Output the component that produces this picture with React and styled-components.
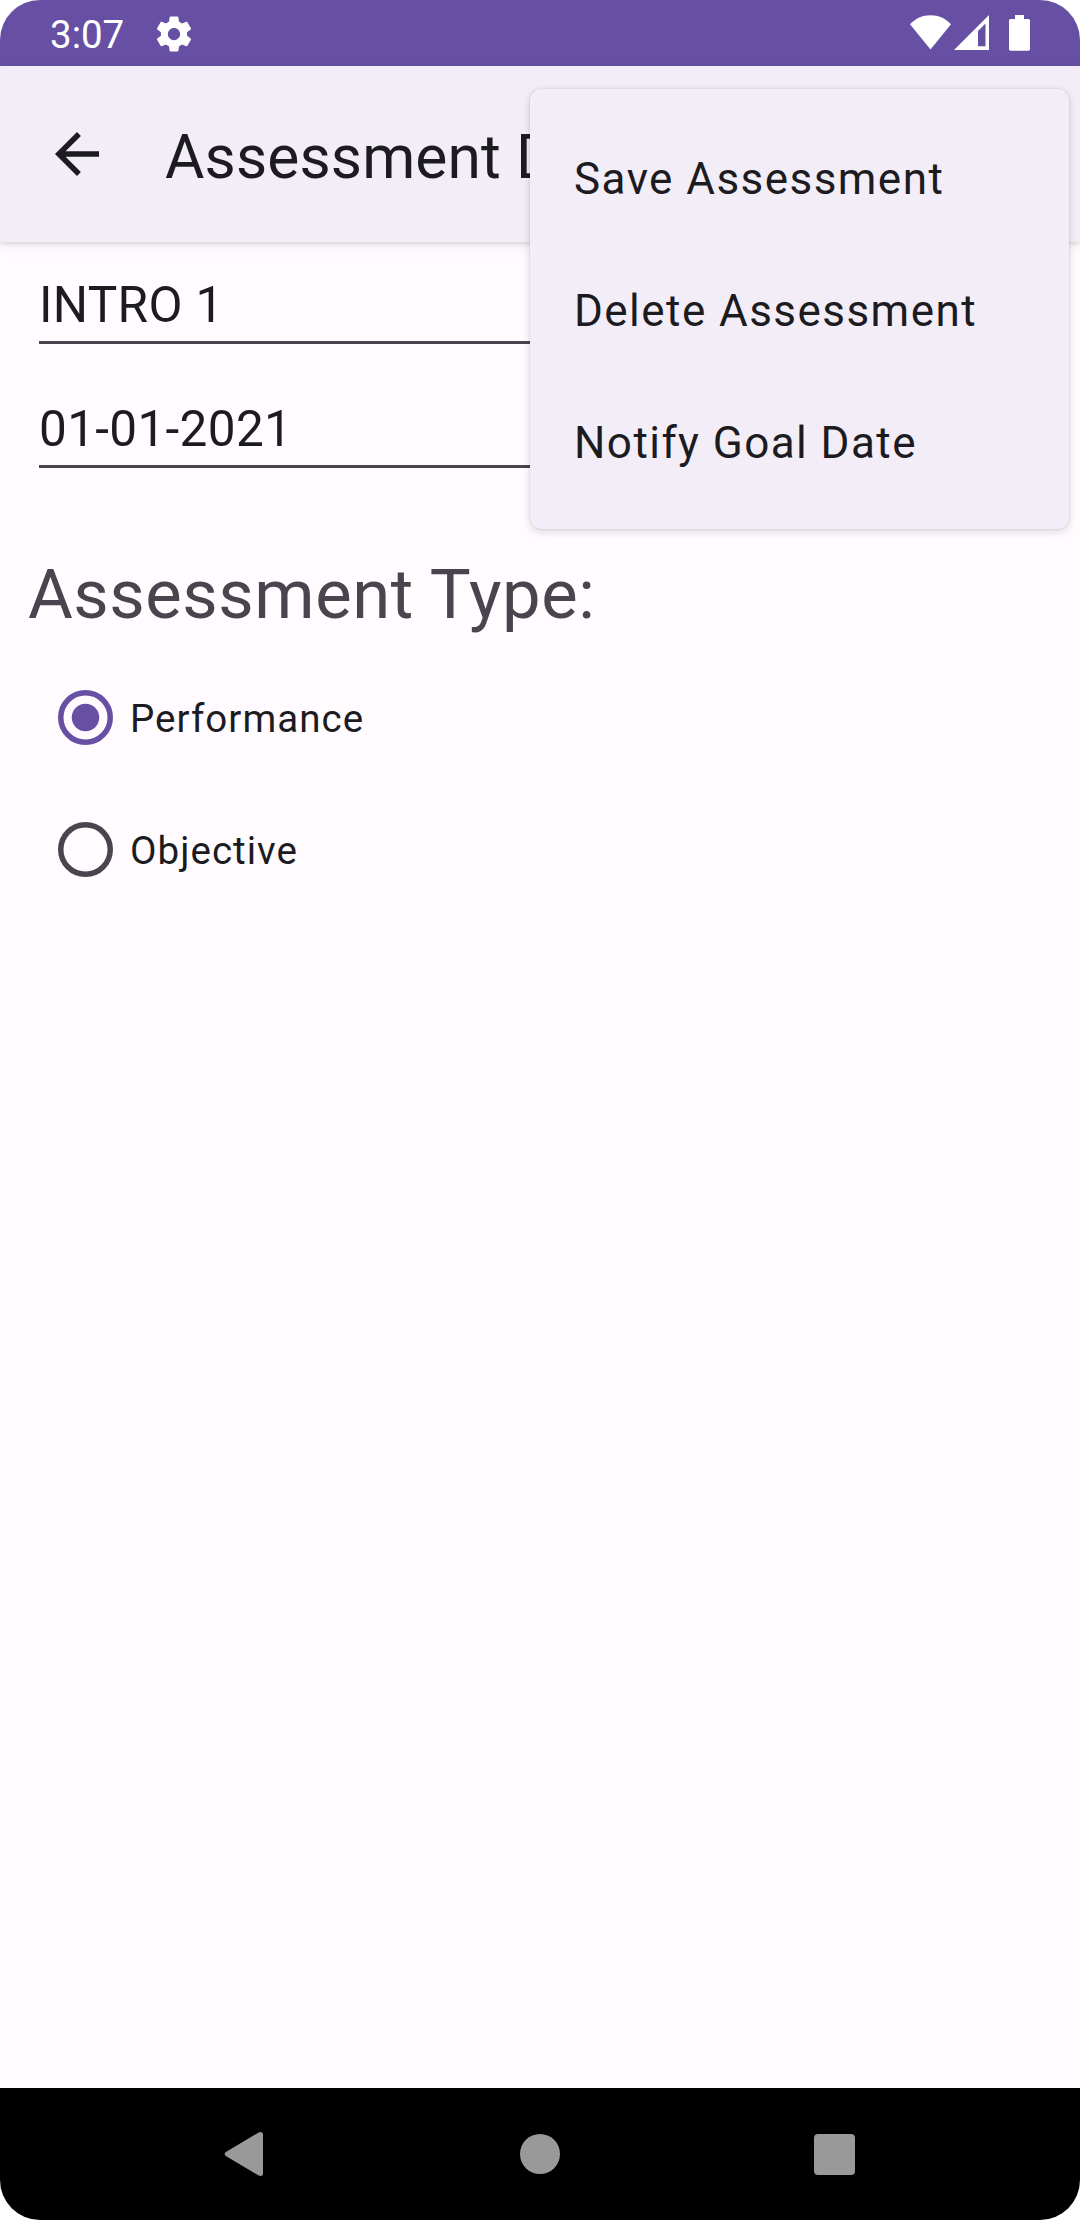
import React from "react";
import styled, { createGlobalStyle } from "styled-components";

const GlobalStyle = createGlobalStyle`
  *, *::before, *::after { box-sizing: border-box; }
  body { margin: 0; background: #ffffff; }
`;

const Device = styled.div`
  position: relative;
  display: flex;
  flex-direction: column;
  width: 1080px;
  height: 2220px;
  overflow: hidden;
  border-radius: 40px;
  background: #fffbff;
  color: #1c1b1f;
  font-family: Roboto, "Liberation Sans", sans-serif;
`;

const StatusBar = styled.header`
  display: flex;
  flex: none;
  align-items: center;
  height: 66px;
  padding: 0 48px 0 50px;
  background: #6750a4;
  color: #ffffff;
`;

const Clock = styled.span`
  padding-top: 3px;
  font-size: 38.5px;
  line-height: 46px;
`;

const StatusIcons = styled.div`
  display: flex;
  margin-left: auto;
`;

const GearIcon = styled.svg`
  width: 42px;
  height: 42px;
  margin-left: 29px;
  margin-top: 1px;
  fill: currentColor;
`;

const Toolbar = styled.div`
  display: flex;
  flex: none;
  align-items: center;
  height: 176px;
  padding-left: 44px;
  background: #f3edf7;
  box-shadow: 0 2px 4px rgba(0, 0, 0, 0.1), 0 4px 14px rgba(0, 0, 0, 0.07);
`;

const BackButton = styled.button`
  display: flex;
  padding: 0;
  border: 0;
  background: none;
  color: inherit;

  svg {
    width: 66px;
    height: 66px;
    fill: currentColor;
  }
`;

const Title = styled.h1`
  margin: 0 0 0 55px;
  padding-top: 7px;
  font-size: 60.5px;
  font-weight: 400;
  letter-spacing: 0.12px;
  line-height: 72px;
  white-space: nowrap;
`;

const Content = styled.main`
  display: flex;
  flex: 1;
  flex-direction: column;
`;

const Fields = styled.div`
  display: flex;
  flex-direction: column;
  gap: 55px;
  margin: 33px 39px 0;
`;

const Field = styled.div`
  display: flex;
  flex-direction: column;
  justify-content: space-between;
  height: 69px;
  border-bottom: 3px solid #49454f;
`;

const FieldText = styled.span`
  padding-top: 1px;
  font-size: 49.5px;
  letter-spacing: 0.33px;
  line-height: 58px;
`;

const SectionTitle = styled.h2`
  margin: 0;
  padding: 84px 0 0 28px;
  color: #49454f;
  font-size: 68.75px;
  font-weight: 400;
  letter-spacing: 0.52px;
  line-height: 86px;
`;

const RadioGroup = styled.div`
  display: flex;
  flex-direction: column;
  padding: 13px 0 0 58px;
`;

const RadioOption = styled.label`
  display: flex;
  align-items: center;
  gap: 17px;
  height: 132px;
  font-size: 38.5px;
  letter-spacing: 1.04px;
  line-height: 46px;
`;

const RadioMark = styled.svg`
  width: 55px;
  height: 55px;
  color: ${({ $checked }) => ($checked ? "#6750a4" : "#49454f")};
`;

const RadioLabel = styled.span`
  padding-top: 3px;
`;

const Menu = styled.ul`
  position: absolute;
  top: 89px;
  right: 11px;
  width: 539px;
  height: 440px;
  margin: 0;
  padding: 22px 0;
  border-radius: 11px;
  background: #f3edf7;
  box-shadow: 0 0 2px rgba(0, 0, 0, 0.16), 0 3px 10px rgba(0, 0, 0, 0.14);
  list-style: none;
`;

const MenuItem = styled.li`
  display: flex;
  align-items: center;
  height: 132px;
  padding: 4px 0 0 44px;
  font-size: 44px;
  letter-spacing: 1.45px;
  line-height: 52px;
`;

const NavBar = styled.nav`
  display: flex;
  flex: none;
  align-items: center;
  justify-content: space-between;
  height: 132px;
  padding: 0 213px;
  background: #000000;

  svg {
    width: 66px;
    height: 66px;
    fill: #999999;
  }
`;

const fields = ["INTRO 1", "01-01-2021"];
const options = [
  { label: "Performance", checked: true },
  { label: "Objective", checked: false },
];
const actions = ["Save Assessment", "Delete Assessment", "Notify Goal Date"];

export default function App() {
  return (
    <>
      <GlobalStyle />
      <Device>
        <StatusBar>
          <Clock>3:07</Clock>
          <GearIcon viewBox="0 0 24 24">
            <path d="M19.43 12.98c.04-.32.07-.64.07-.98s-.03-.66-.07-.98l2.11-1.65c.19-.15.24-.42.12-.64l-2-3.46c-.12-.22-.39-.3-.61-.22l-2.49 1c-.52-.4-1.08-.73-1.69-.98l-.38-2.65C14.46 2.18 14.25 2 14 2h-4c-.25 0-.46.18-.49.42l-.38 2.65c-.61.25-1.17.59-1.69.98l-2.49-1c-.23-.09-.49 0-.61.22l-2 3.46c-.13.22-.07.49.12.64l2.11 1.65c-.04.32-.07.65-.07.98s.03.66.07.98l-2.11 1.65c-.19.15-.24.42-.12.64l2 3.46c.12.22.39.3.61.22l2.49-1c.52.4 1.08.73 1.69.98l.38 2.65c.03.24.24.42.49.42h4c.25 0 .46-.18.49-.42l.38-2.65c.61-.25 1.17-.59 1.69-.98l2.49 1c.23.09.49 0 .61-.22l2-3.46c.12-.22.07-.49-.12-.64l-2.11-1.65zM12 15.5c-1.93 0-3.5-1.57-3.5-3.5s1.57-3.5 3.5-3.5 3.5 1.57 3.5 3.5-1.57 3.5-3.5 3.5z" />
          </GearIcon>
          <StatusIcons>
            <svg width="124" height="66" viewBox="908 0 124 66" fill="#ffffff">
              <path d="M930.5 49.5 910 24.3C915.500 18.300 922.500 15.200 930.500 15.200S945.500 18.300 951 24.300Z" />
              <path
                fillRule="evenodd"
                d="M954 50 989 15V50ZM978 31V46.200H985.500V23.600Z"
              />
              <path d="M1015 15H1024V19H1028.500Q1030 19 1030 20.500V49Q1030 50.700 1028.500 50.700H1010.500Q1009 50.700 1009 49V20.500Q1009 19 1010.500 19H1015Z" />
            </svg>
          </StatusIcons>
        </StatusBar>

        <Toolbar>
          <BackButton aria-label="Navigate up">
            <svg viewBox="0 0 24 24">
              <path d="M20 11H7.830l5.590-5.590L12 4l-8 8 8 8 1.410-1.410L7.830 13H20v-2z" />
            </svg>
          </BackButton>
          <Title>Assessment Details</Title>
        </Toolbar>

        <Content>
          <Fields>
            {fields.map((text) => (
              <Field key={text}>
                <FieldText>{text}</FieldText>
              </Field>
            ))}
          </Fields>
          <SectionTitle>Assessment Type:</SectionTitle>
          <RadioGroup>
            {options.map(({ label, checked }) => (
              <RadioOption key={label}>
                <RadioMark $checked={checked} viewBox="0 0 20 20">
                  <circle
                    cx="10"
                    cy="10"
                    r="9"
                    fill="none"
                    stroke="currentColor"
                    strokeWidth="2"
                  />
                  {checked && <circle cx="10" cy="10" r="5" fill="currentColor" />}
                </RadioMark>
                <RadioLabel>{label}</RadioLabel>
              </RadioOption>
            ))}
          </RadioGroup>
        </Content>

        <NavBar>
          <svg viewBox="0 0 66 66">
            <path d="M12.800 30.900 45.700 11.400Q50 9.800 50 13.500V52.500Q50 56.200 45.700 54.600L12.800 35.100Q10.500 33 12.800 30.900Z" />
          </svg>
          <svg viewBox="0 0 66 66">
            <circle cx="33" cy="33" r="20" />
          </svg>
          <svg viewBox="0 0 66 66">
            <rect x="13" y="13" width="41" height="41" rx="4" />
          </svg>
        </NavBar>

        <Menu>
          {actions.map((text) => (
            <MenuItem key={text}>{text}</MenuItem>
          ))}
        </Menu>
      </Device>
    </>
  );
}
